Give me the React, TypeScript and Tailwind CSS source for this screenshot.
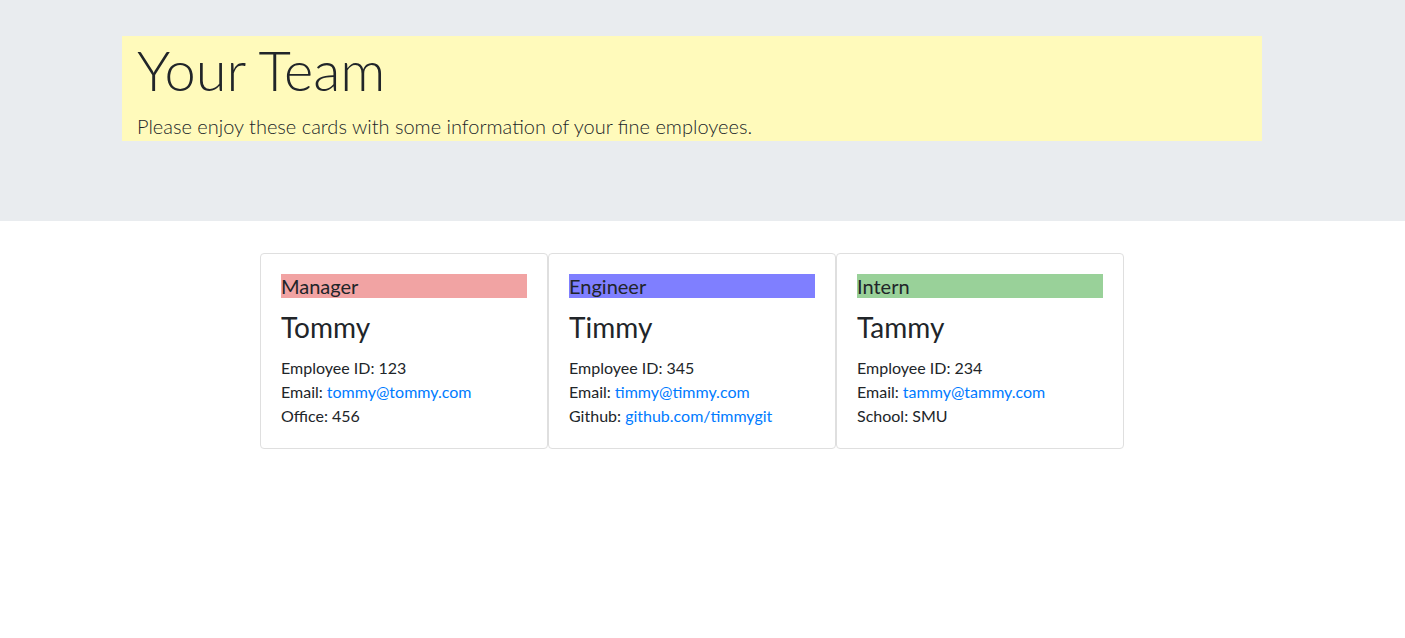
import React from 'react';

type Employee = {
  role: string;
  roleBg: string;
  name: string;
  id: number;
  email: string;
  extraLabel: string;
  extra: string;
  extraLink?: boolean;
};

const employees: Employee[] = [
  { role: 'Manager', roleBg: 'bg-[#f1a3a3]', name: 'Tommy', id: 123, email: 'tommy@tommy.com', extraLabel: 'Office', extra: '456' },
  { role: 'Engineer', roleBg: 'bg-[#7f7fff]', name: 'Timmy', id: 345, email: 'timmy@timmy.com', extraLabel: 'Github', extra: 'github.com/timmygit', extraLink: true },
  { role: 'Intern', roleBg: 'bg-[#99d199]', name: 'Tammy', id: 234, email: 'tammy@tammy.com', extraLabel: 'School', extra: 'SMU' },
];

const EmployeeCard: React.FC<{ emp: Employee }> = ({ emp }) => (
  <div className="w-[288px] border border-[#dfdfdf] rounded-[4px] p-5 bg-white">
    <h5 className={`${emp.roleBg} text-[20px] leading-[24px] text-[#212529]`}>{emp.role}</h5>
    <h3 className="mt-3 mb-3 text-[28px] leading-[34px] text-[#212529]">{emp.name}</h3>
    <div className="text-[16px] leading-[24px] text-[#212529]">
      <p>Employee ID: {emp.id}</p>
      <p>
        Email: <a href="#" className="text-[#007bff]">{emp.email}</a>
      </p>
      <p>
        {emp.extraLabel}:{' '}
        {emp.extraLink ? <a href="#" className="text-[#007bff]">{emp.extra}</a> : emp.extra}
      </p>
    </div>
  </div>
);

const App: React.FC = () => {
  return (
    <div className="min-h-screen bg-white font-['Lato','Open_Sans',sans-serif] text-[#212529]">
      <div className="h-[221px] bg-[#e9ecef] pt-9">
        <div className="w-[1384px]">
          <div className="mx-auto w-[1140px] bg-[#fffabb] px-[15px]">
            <h1 className="mb-2 text-[56px] leading-[67px] font-light">Your Team</h1>
            <p className="text-[20px] leading-[30px] font-light">
              Please enjoy these cards with some information of your fine employees.
            </p>
          </div>
        </div>
      </div>
      <div className="w-[1384px] mt-8 flex justify-center">
        {employees.map((emp) => (
          <EmployeeCard key={emp.name} emp={emp} />
        ))}
      </div>
    </div>
  );
};

export default App;
